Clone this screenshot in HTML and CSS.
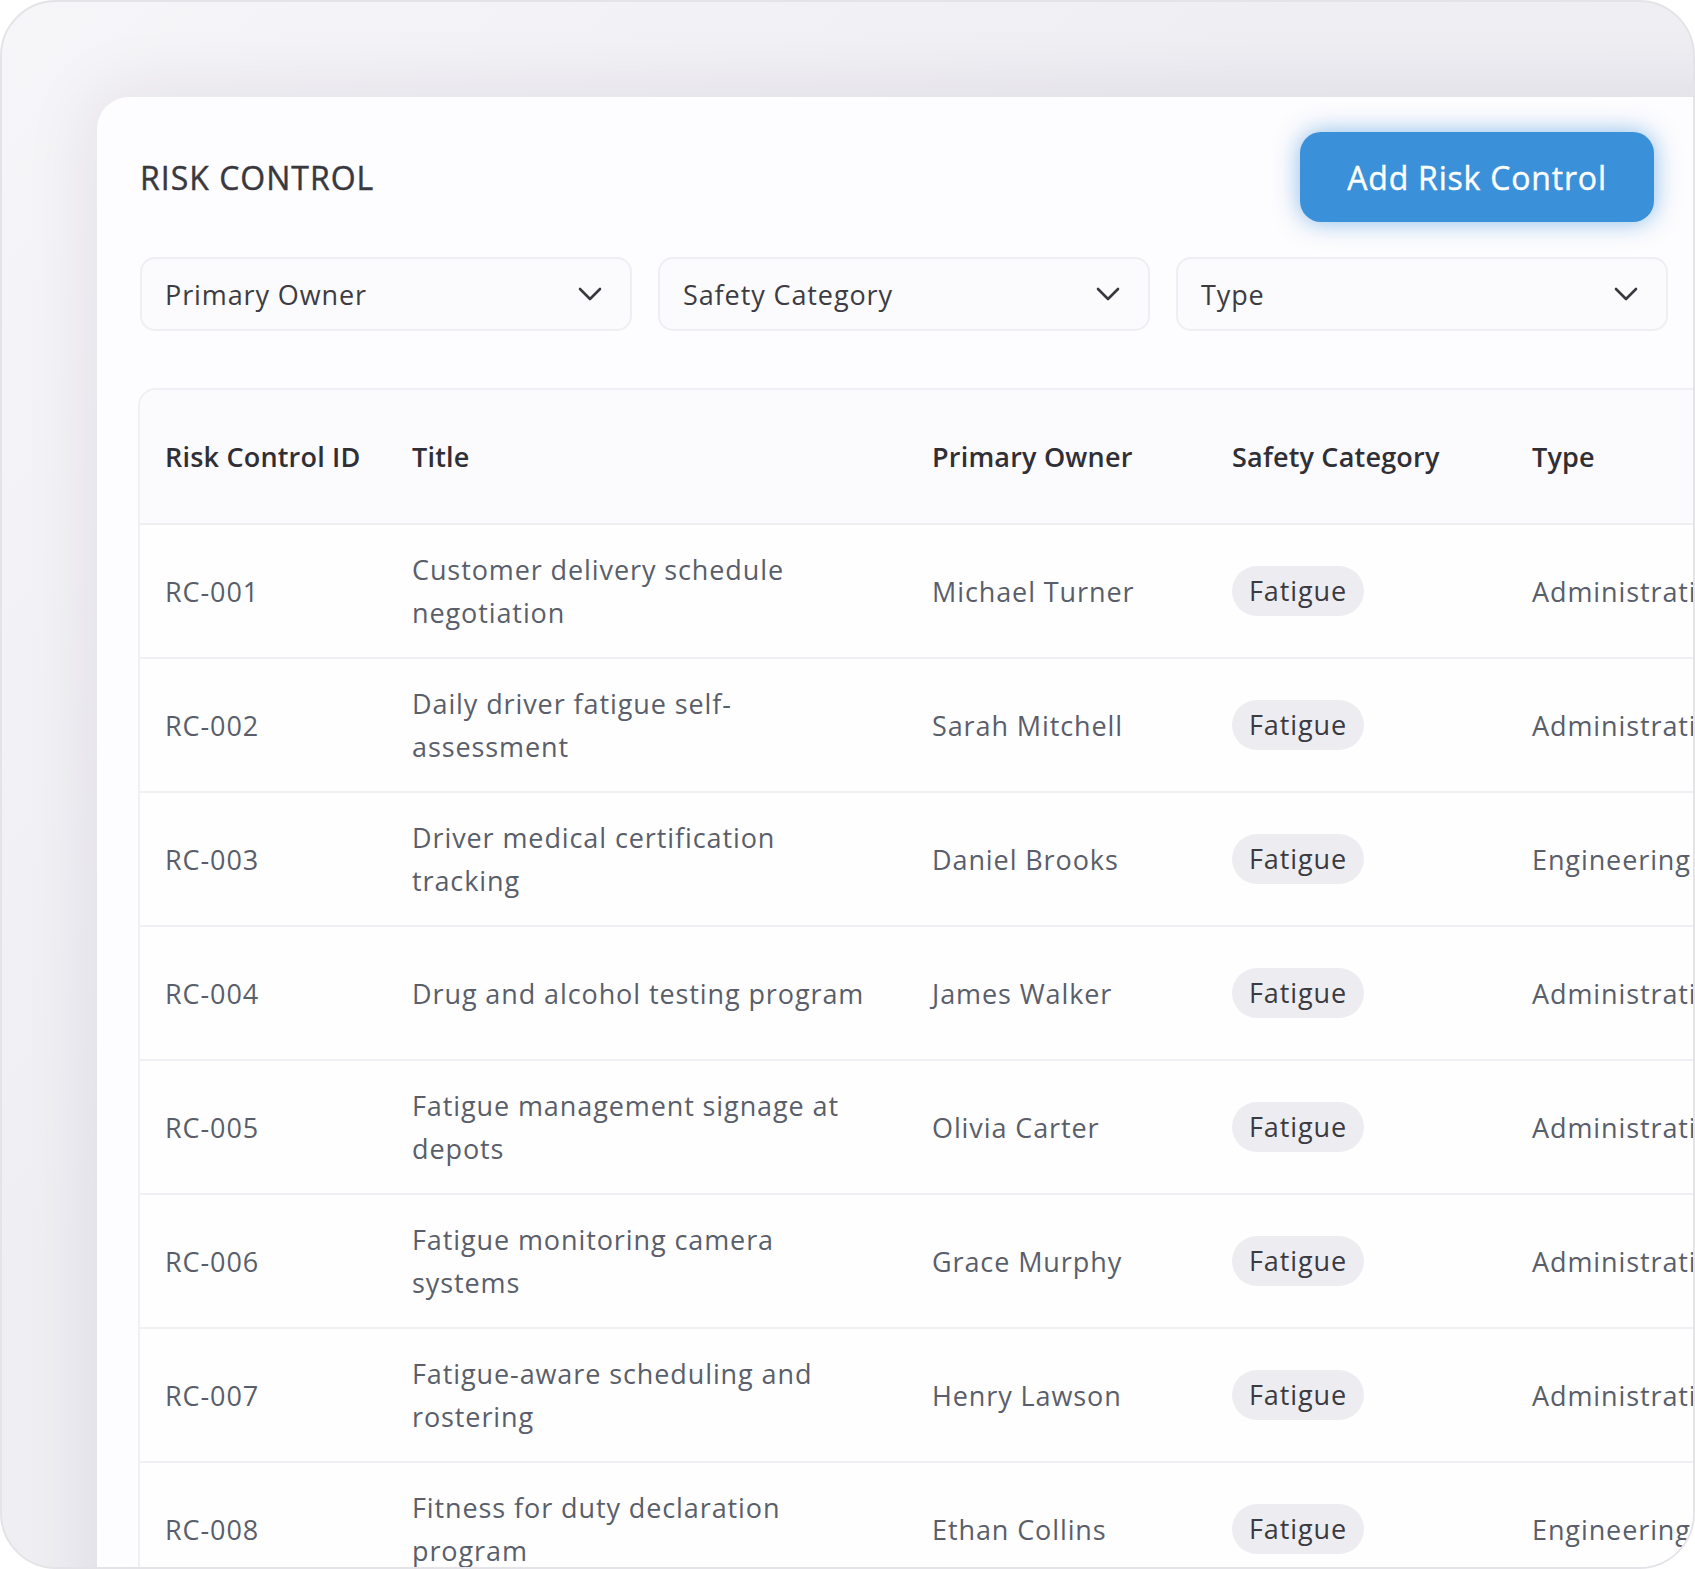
FILE: index.html
```html
<!DOCTYPE html>
<html>

<head>
  <title>Risk Control</title>
  <link rel="stylesheet" href="styles.css">
</head>

<body>
  <div class="frame">
    <div class="card">
      <div class="card-header">
        <h1 class="page-title">RISK CONTROL</h1>
        <button class="add-btn">Add Risk Control</button>
      </div>

      <div class="filters">
        <div class="select">
          <span>Primary Owner</span>
          <svg class="chevron" viewBox="0 0 24 14"><polyline points="2,2 12,12 22,2" /></svg>
        </div>
        <div class="select">
          <span>Safety Category</span>
          <svg class="chevron" viewBox="0 0 24 14"><polyline points="2,2 12,12 22,2" /></svg>
        </div>
        <div class="select">
          <span>Type</span>
          <svg class="chevron" viewBox="0 0 24 14"><polyline points="2,2 12,12 22,2" /></svg>
        </div>
      </div>

      <div class="table-wrap">
        <table class="risk-table">
          <colgroup>
            <col class="col-id">
            <col class="col-title">
            <col class="col-owner">
            <col class="col-cat">
            <col class="col-type">
          </colgroup>
          <thead>
            <tr>
              <th>Risk Control ID</th>
              <th>Title</th>
              <th>Primary Owner</th>
              <th>Safety Category</th>
              <th>Type</th>
            </tr>
          </thead>
          <tbody>
            <tr>
              <td>RC-001</td>
              <td>Customer delivery schedule<br>negotiation</td>
              <td>Michael Turner</td>
              <td><span class="pill">Fatigue</span></td>
              <td>Administrative</td>
            </tr>
            <tr>
              <td>RC-002</td>
              <td>Daily driver fatigue self-<br>assessment</td>
              <td>Sarah Mitchell</td>
              <td><span class="pill">Fatigue</span></td>
              <td>Administrative</td>
            </tr>
            <tr>
              <td>RC-003</td>
              <td>Driver medical certification<br>tracking</td>
              <td>Daniel Brooks</td>
              <td><span class="pill">Fatigue</span></td>
              <td>Engineering</td>
            </tr>
            <tr>
              <td>RC-004</td>
              <td>Drug and alcohol testing program</td>
              <td>James Walker</td>
              <td><span class="pill">Fatigue</span></td>
              <td>Administrative</td>
            </tr>
            <tr>
              <td>RC-005</td>
              <td>Fatigue management signage at<br>depots</td>
              <td>Olivia Carter</td>
              <td><span class="pill">Fatigue</span></td>
              <td>Administrative</td>
            </tr>
            <tr>
              <td>RC-006</td>
              <td>Fatigue monitoring camera<br>systems</td>
              <td>Grace Murphy</td>
              <td><span class="pill">Fatigue</span></td>
              <td>Administrative</td>
            </tr>
            <tr>
              <td>RC-007</td>
              <td>Fatigue-aware scheduling and<br>rostering</td>
              <td>Henry Lawson</td>
              <td><span class="pill">Fatigue</span></td>
              <td>Administrative</td>
            </tr>
            <tr>
              <td>RC-008</td>
              <td>Fitness for duty declaration<br>program</td>
              <td>Ethan Collins</td>
              <td><span class="pill">Fatigue</span></td>
              <td>Engineering</td>
            </tr>
          </tbody>
        </table>
      </div>
    </div>
  </div>
</body>

</html>
```

FILE: styles.css
```css
body {
  margin: 0;
  background-color: #ffffff;
  font-family: "Open Sans", "Noto Sans", sans-serif;
  letter-spacing: 0.9px;
}

.frame {
  width: 1695px;
  height: 1569px;
  box-sizing: border-box;
  border: 2px solid #e4e3e8;
  border-radius: 56px;
  overflow: hidden;
  padding: 95px 0 0 95px;
  background: linear-gradient(135deg, #f6f5f8 0%, #efeef3 40%, #eeedf2 100%);
}

.card {
  width: 1640px;
  min-height: 1600px;
  box-sizing: border-box;
  padding: 35px 43px 0;
  border-radius: 32px 0 0 0;
  background-color: #fdfcfe;
  box-shadow: 0 0 70px 8px rgba(40, 30, 80, 0.08);
}

.card-header {
  display: flex;
  justify-content: space-between;
  align-items: center;
  width: 1514px;
}

.page-title {
  margin: 0;
  font-size: 32px;
  font-weight: 500;
  color: #38383e;
  letter-spacing: 1px;
  -webkit-text-stroke: 0.4px #38383e;
}

.add-btn {
  width: 354px;
  height: 90px;
  border: none;
  border-radius: 21px;
  background-color: #3a91da;
  color: #ffffff;
  font-family: inherit;
  font-size: 32px;
  font-weight: 500;
  letter-spacing: 0.8px;
  -webkit-text-stroke: 0.4px #ffffff;
  box-shadow: 0 0 24px rgba(58, 145, 218, 0.6);
  cursor: pointer;
}

.filters {
  display: grid;
  grid-template-columns: repeat(3, 492px);
  gap: 26px;
  margin-top: 35px;
}

.select {
  display: flex;
  justify-content: space-between;
  align-items: center;
  height: 74px;
  box-sizing: border-box;
  padding: 0 28px 0 23px;
  border: 2px solid #efeef3;
  border-radius: 15px;
  background-color: #fbfafd;
  font-size: 27px;
  color: #3c3c42;
}

.chevron {
  width: 24px;
  height: 14px;
  fill: none;
  stroke: #38383e;
  stroke-width: 2.6;
  stroke-linecap: round;
  stroke-linejoin: round;
}

.table-wrap {
  margin-top: 57px;
  margin-left: -2px;
  width: 1700px;
  border: 2px solid #f0eff4;
  border-radius: 18px;
  overflow: hidden;
}

.risk-table {
  width: 100%;
  border-collapse: collapse;
  table-layout: fixed;
  font-size: 27px;
}

.col-id { width: 247px; }
.col-title { width: 520px; }
.col-owner { width: 300px; }
.col-cat { width: 300px; }

.risk-table th {
  height: 133px;
  padding: 0 25px;
  text-align: left;
  font-weight: 600;
  letter-spacing: 0.2px;
  color: #2f2f35;
  background-color: #fbfafd;
  border-bottom: 2px solid #efeef3;
  white-space: nowrap;
}

.risk-table td {
  height: 132px;
  padding: 0 25px;
  line-height: 43px;
  color: #5a5e6a;
  background-color: #fefeff;
  border-bottom: 2px solid #f0eff4;
  white-space: nowrap;
  overflow: hidden;
}

.pill {
  display: inline-block;
  height: 50px;
  line-height: 50px;
  padding: 0 17px;
  border-radius: 25px;
  background-color: #ededf1;
  color: #3a3a40;
}
```
